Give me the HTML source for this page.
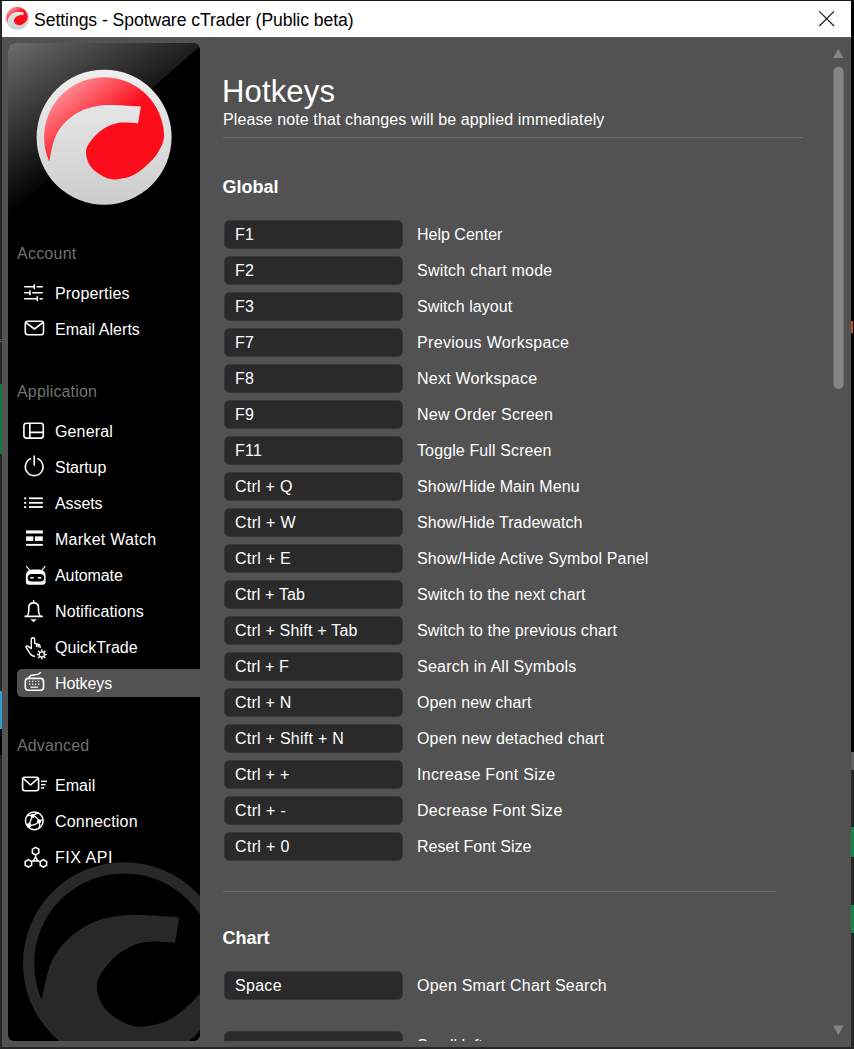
<!DOCTYPE html>
<html><head><meta charset="utf-8"><title>Settings - Spotware cTrader (Public beta)</title>
<style>
*{margin:0;padding:0;box-sizing:border-box}
html,body{width:854px;height:1049px;overflow:hidden;background:#000}
body{position:relative;font-family:"Liberation Sans",sans-serif;color:#fff;font-size:16px}
.abs{position:absolute}
#outer{left:0;top:0;width:854px;height:1049px;background:#262626}
#win{left:2px;top:1px;width:849px;height:1046px;background:#525252;overflow:hidden}
#tbar{left:0;top:0;width:849px;height:36px;background:#fff}
#ttl{left:32px;top:7px;font-size:17.6px;line-height:24px;color:#000;white-space:nowrap;letter-spacing:-0.06px}
#side{left:6px;top:42px;width:192px;height:998px;border-radius:7px 7px 6px 6px;overflow:hidden;background:#000}
#gloss{left:0;top:0;width:192px;height:180px;background:linear-gradient(147.6deg,#6c6c6c 0px,#000 146px);clip-path:polygon(0 0,195.5px 0,0 172px)}
.sh{left:9px;color:#707070;font-size:16px;line-height:20px;white-space:nowrap}
.si{left:47px;color:#fff;font-size:16px;line-height:20px;white-space:nowrap}
#sel{left:9px;top:626px;width:190px;height:28px;background:#525252;border-radius:5px 0 0 5px}
#cont{left:198px;top:36px;width:651px;height:1004px;overflow:hidden}
h1{font-weight:normal;font-size:31px;line-height:36px;left:22px;top:37px;white-space:nowrap;letter-spacing:0.15px}
.sub{left:23px;top:73px;line-height:20px;white-space:nowrap}
.hr{height:1px;background:#686868;left:23px}
.gh{left:22.5px;font-weight:bold;font-size:18px;line-height:20px;white-space:nowrap}
.key{left:24px;width:179px;height:29px;background:#2a2a2a;border:1px solid #383838;border-radius:5.5px;padding-left:10px;line-height:27px;white-space:nowrap}
.lbl{left:217px;line-height:20px;white-space:nowrap}
</style></head><body>
<div id="outer" class="abs">

<div class="abs" style="left:0;top:0;width:854px;height:1px;background:#1a1a1a"></div>
<div class="abs" style="left:0;top:384px;width:2px;height:70px;background:#0f7a3c"></div>
<div class="abs" style="left:0;top:339px;width:2px;height:1px;background:#0f7a3c"></div>
<div class="abs" style="left:0;top:341px;width:2px;height:1px;background:#b8501e"></div>
<div class="abs" style="left:0;top:691px;width:2px;height:38px;background:#2d9fd0"></div>
<div class="abs" style="left:0;top:729px;width:2px;height:26px;background:#000"></div>
<div class="abs" style="left:851px;top:0;width:3px;height:752px;background:#000"></div>
<div class="abs" style="left:851px;top:321px;width:2px;height:12px;background:#c2501c"></div>
<div class="abs" style="left:851px;top:752px;width:3px;height:18px;background:#606060"></div>
<div class="abs" style="left:851px;top:827px;width:3px;height:30px;background:#0f8a44"></div>
<div class="abs" style="left:851px;top:905px;width:3px;height:28px;background:#0f8a44"></div>
<div id="win" class="abs">
<div id="tbar" class="abs">
<svg class="abs" style="left:0;top:0" width="40" height="36" viewBox="2 1 40 36"><g transform="translate(17.2,17.7) scale(0.1775)">
<defs>
<linearGradient id="wa" gradientUnits="userSpaceOnUse" x1="0" y1="-67.5" x2="0" y2="67.5"><stop offset="0" stop-color="#eeeeee"/><stop offset="1" stop-color="#cdcdcd"/></linearGradient>
<linearGradient id="ra" gradientUnits="userSpaceOnUse" x1="-38" y1="-58" x2="2" y2="-8"><stop offset="0" stop-color="#ff9aa0"/><stop offset="1" stop-color="#fb0d1b"/></linearGradient>
</defs>
<circle r="67.5" fill="url(#wa)"/>
<circle r="60" fill="url(#ra)"/>
<path d="M-55.00,24.50 C-53.78,19.97 -51.85,5.07 -47.70,-2.70 C-43.55,-10.47 -37.43,-17.27 -30.10,-22.10 C-22.77,-26.93 -14.83,-30.25 -3.70,-31.70 C7.43,-33.15 29.97,-30.95 36.70,-30.80 L33.90,-13.80 C30.55,-13.87 20.07,-15.45 13.80,-14.20 C7.53,-12.95 1.27,-9.97 -3.70,-6.30 C-8.67,-2.63 -13.65,3.70 -16.00,7.80 C-18.35,11.90 -18.38,14.50 -17.80,18.30 C-17.22,22.10 -15.72,26.93 -12.50,30.60 C-9.28,34.27 -2.88,38.40 1.50,40.30 C5.88,42.20 8.82,42.58 13.80,42.00 C18.78,41.42 25.53,40.15 31.40,36.80 C37.27,33.45 44.75,26.43 49.00,21.90 C53.25,17.37 55.13,12.92 56.90,9.60 C58.67,6.28 58.98,4.27 59.60,2.00 C60.22,-0.27 60.43,-3.00 60.60,-4.00 L63.8,-4.2 A64,64 0 0 1 -58.6,26 Z" fill="url(#wa)"/>
</g></svg>
<div id="ttl" class="abs">Settings - Spotware cTrader (Public beta)</div>
<svg class="abs" style="left:810px;top:4px" width="30" height="30" viewBox="812 5 30 30"><path d="M819.3,11.3L834,26M834,11.3L819.3,26" stroke="#1a1a1a" stroke-width="1.15" fill="none"/></svg>
</div>
<div id="side" class="abs"><div id="gloss" class="abs"></div>
<svg class="abs" style="left:0;top:0" width="192" height="998" viewBox="8 43 192 998">
<g transform="translate(124.2,963.4) scale(1.5)">
<circle r="63.75" fill="none" stroke="#282828" stroke-width="7.5"/>
<path d="M-55.00,24.50 C-53.78,19.97 -51.85,5.07 -47.70,-2.70 C-43.55,-10.47 -37.43,-17.27 -30.10,-22.10 C-22.77,-26.93 -14.83,-30.25 -3.70,-31.70 C7.43,-33.15 29.97,-30.95 36.70,-30.80 L33.90,-13.80 C30.55,-13.87 20.07,-15.45 13.80,-14.20 C7.53,-12.95 1.27,-9.97 -3.70,-6.30 C-8.67,-2.63 -13.65,3.70 -16.00,7.80 C-18.35,11.90 -18.38,14.50 -17.80,18.30 C-17.22,22.10 -15.72,26.93 -12.50,30.60 C-9.28,34.27 -2.88,38.40 1.50,40.30 C5.88,42.20 8.82,42.58 13.80,42.00 C18.78,41.42 25.53,40.15 31.40,36.80 C37.27,33.45 44.75,26.43 49.00,21.90 C53.25,17.37 55.13,12.92 56.90,9.60 C58.67,6.28 58.98,4.27 59.60,2.00 C60.22,-0.27 60.43,-3.00 60.60,-4.00 L63.8,-4.2 A64,64 0 0 1 -58.6,26 Z" fill="#282828"/>
</g>
<g transform="translate(104.1,137.2) scale(1.0)">
<defs>
<linearGradient id="wb" gradientUnits="userSpaceOnUse" x1="0" y1="-67.5" x2="0" y2="67.5"><stop offset="0" stop-color="#eeeeee"/><stop offset="1" stop-color="#cdcdcd"/></linearGradient>
<linearGradient id="rb" gradientUnits="userSpaceOnUse" x1="-38" y1="-58" x2="2" y2="-8"><stop offset="0" stop-color="#ff9aa0"/><stop offset="1" stop-color="#fb0d1b"/></linearGradient>
</defs>
<circle r="67.5" fill="url(#wb)"/>
<circle r="60" fill="url(#rb)"/>
<path d="M-55.00,24.50 C-53.78,19.97 -51.85,5.07 -47.70,-2.70 C-43.55,-10.47 -37.43,-17.27 -30.10,-22.10 C-22.77,-26.93 -14.83,-30.25 -3.70,-31.70 C7.43,-33.15 29.97,-30.95 36.70,-30.80 L33.90,-13.80 C30.55,-13.87 20.07,-15.45 13.80,-14.20 C7.53,-12.95 1.27,-9.97 -3.70,-6.30 C-8.67,-2.63 -13.65,3.70 -16.00,7.80 C-18.35,11.90 -18.38,14.50 -17.80,18.30 C-17.22,22.10 -15.72,26.93 -12.50,30.60 C-9.28,34.27 -2.88,38.40 1.50,40.30 C5.88,42.20 8.82,42.58 13.80,42.00 C18.78,41.42 25.53,40.15 31.40,36.80 C37.27,33.45 44.75,26.43 49.00,21.90 C53.25,17.37 55.13,12.92 56.90,9.60 C58.67,6.28 58.98,4.27 59.60,2.00 C60.22,-0.27 60.43,-3.00 60.60,-4.00 L63.8,-4.2 A64,64 0 0 1 -58.6,26 Z" fill="url(#wb)"/>
</g>

<!-- properties -->
<g stroke="#fff" stroke-width="1.5" fill="none">
<path d="M24.2,286.8H34.3M36.6,286.8H42.8M24.2,292.8H30M32.2,292.8H42.8M24.2,298.7H37.3M39.6,298.7H42.8"/>
<path d="M34.3,284.3V289.3M30,290.3V295.3M37.3,296.2V301.2"/>
</g>
<!-- email alerts -->
<g fill="none" stroke="#fff" stroke-width="1.6" stroke-linecap="butt" stroke-linejoin="round"><rect x="25.3" y="321.3" width="18.2" height="13.4" rx="2.4"/><path d="M26,322.6L34.4,329L42.8,322.6"/></g>
<!-- general -->
<g fill="none" stroke="#fff" stroke-width="1.6" stroke-linecap="butt" stroke-linejoin="round"><rect x="23.9" y="423.3" width="19.4" height="14.8" rx="2.6"/><path d="M29.8,423.3V438.1M29.8,432.4H43.3"/></g>
<!-- startup -->
<g fill="none" stroke="#fff" stroke-width="1.6" stroke-linecap="butt" stroke-linejoin="round"><path d="M31.1,458.6A8.8,8.8 0 1 0 37.3,458.6"/><path d="M34.2,455.4V465.8"/></g>
<!-- assets -->
<g fill="#fff"><rect x="24.2" y="497.4" width="2" height="1.9"/><rect x="24.2" y="501.9" width="2" height="1.9"/><rect x="24.2" y="506.1" width="2" height="1.9"/>
<rect x="29" y="497.4" width="13.8" height="1.8"/><rect x="29" y="501.9" width="13.8" height="1.8"/><rect x="29" y="506.1" width="13.8" height="1.8"/></g>
<!-- market watch -->
<g fill="#fff"><rect x="26.1" y="530.4" width="16.7" height="3.1"/><rect x="26.1" y="536.4" width="7.2" height="4.5"/><rect x="34.9" y="536.4" width="7.9" height="4.5"/><rect x="26.1" y="543.9" width="16.7" height="1.9"/></g>
<!-- automate -->
<g><path d="M26.3,566.2L29.8,570.4M45.3,566.2L41.9,570.4" stroke="#fff" stroke-width="1.2" fill="none"/>
<path d="M31.9,569.4H39.6A6,6 0 0 1 45.6,575.4V581.8A3,3 0 0 1 42.6,584.8H28.9A3,3 0 0 1 25.9,581.8V575.4A6,6 0 0 1 31.9,569.4Z" fill="#fff"/>
<rect x="27.7" y="573.9" width="16.5" height="7.7" rx="3.85" fill="#000"/>
<rect x="30.3" y="577" width="3.2" height="1.6" fill="#fff"/><rect x="37.9" y="577" width="3.4" height="1.6" fill="#fff"/></g>
<!-- notifications -->
<g fill="none" stroke="#fff" stroke-width="1.6" stroke-linecap="butt" stroke-linejoin="round" stroke-width="1.5"><path d="M24.5,616.4H42.8M27,616C28.6,614.6 28.8,613 28.8,610.5V607.6C28.8,604.6 30.9,602.9 33.6,602.9C36.3,602.9 38.5,604.6 38.5,607.6V610.5C38.5,613 38.7,614.6 40.3,616"/><path d="M33.6,600V602.9" stroke-width="1.3"/></g>
<path d="M30.4,619.2H36.8L33.6,622.2Z" fill="#fff"/>
<!-- quicktrade -->
<g fill="none" stroke="#fff" stroke-width="1.45" stroke-linecap="round" stroke-linejoin="round">
<path d="M34.6,656.2C31.5,656.2 30.6,654.6 29,651.9L26.2,647.5C25.6,646.4 26.6,645.5 27.8,646.2L31.3,648.6V639.4C31.3,637.3 34.7,637.3 34.7,639.4V643.4L38.6,644.4C39.6,644.7 40.1,645.5 40.1,646.6V647.6"/>
<path d="M36.5,644.2V646.4M38.3,644.6V646.8"/>
</g>
<g fill="none" stroke="#fff"><circle cx="41.8" cy="654.4" r="2.6" stroke-width="1.3"/>
<path d="M41.8,649.5V651.2M41.8,657.6V659.3M36.9,654.4H38.6M45,654.4H46.7M38.3,650.9L39.5,652.1M44.1,656.7L45.3,657.9M38.3,657.9L39.5,656.7M44.1,652.1L45.3,650.9" stroke-width="1.5"/></g>

</svg>
<div id="sel" class="abs"></div>
<svg class="abs" style="left:0;top:0" width="192" height="998" viewBox="8 43 192 998">

<!-- hotkeys -->
<g fill="none" stroke="#fff" stroke-width="1.6" stroke-linecap="butt" stroke-linejoin="round" stroke-width="1.5"><rect x="25.3" y="678.4" width="18.2" height="11.8" rx="3"/><path d="M29.1,678.2C29.1,675.4 31,675.2 34,674.9C37.6,674.6 40.2,674.6 40.5,672" stroke-width="1.5"/></g>
<g fill="#fff"><rect x="28.95" y="680.75" width="1.3" height="1.3"/><rect x="31.95" y="680.75" width="1.3" height="1.3"/><rect x="34.95" y="680.75" width="1.3" height="1.3"/><rect x="37.95" y="680.75" width="1.3" height="1.3"/><rect x="28.95" y="683.55" width="1.3" height="1.3"/><rect x="31.95" y="683.55" width="1.3" height="1.3"/><rect x="34.95" y="683.55" width="1.3" height="1.3"/><rect x="37.95" y="683.55" width="1.3" height="1.3"/><rect x="30.5" y="686.6" width="7.4" height="1.2"/></g>
<!-- email adv -->
<g fill="none" stroke="#fff" stroke-width="1.6" stroke-linecap="butt" stroke-linejoin="round" stroke-width="1.5"><rect x="22.6" y="777.3" width="16" height="13.4" rx="2.2"/><path d="M23.2,778.4L30.6,785L38,778.4"/></g>
<g fill="#fff"><rect x="41" y="780.6" width="6" height="1.5"/><rect x="41" y="783.9" width="4.6" height="1.5"/><rect x="41" y="787.1" width="3.2" height="1.5"/></g>
<!-- connection -->
<g fill="none" stroke="#fff" stroke-width="1.5"><circle cx="34.3" cy="820.8" r="8.85"/>
<path d="M32.65,815.9Q36.9,816.4 39.05,821.4M39.05,821.4Q35.6,825.6 29,825.35M32.65,815.9Q30.4,820.4 29,825.35M32.65,815.9Q35.4,813.3 38.6,813M32.65,815.9Q29.6,814.9 27,815.9M39.05,821.4Q41.4,819.9 43,819.6M39.05,821.4Q40.3,825 39.2,828.2" stroke-width="1.35"/></g>
<g fill="#fff"><circle cx="32.65" cy="815.9" r="2.1"/><circle cx="29.1" cy="825.3" r="2.4"/><circle cx="39.05" cy="821.4" r="2.1"/></g>
<!-- fix api -->
<polygon points="35.60,847.40 32.40,849.25 32.40,852.95 35.60,854.80 38.80,852.95 38.80,849.25" fill="none" stroke="#fff" stroke-width="1.55"/><polygon points="28.40,859.70 25.20,861.55 25.20,865.25 28.40,867.10 31.60,865.25 31.60,861.55" fill="none" stroke="#fff" stroke-width="1.55"/><polygon points="43.40,859.70 40.20,861.55 40.20,865.25 43.40,867.10 46.60,865.25 46.60,861.55" fill="none" stroke="#fff" stroke-width="1.55"/>
<path d="M35.6,854.8V857.4M31.6,861.6L33.8,860.3M39.6,861.6L37.4,860.3M35.6,857L33.3,861H37.9Z" fill="none" stroke="#fff" stroke-width="1.5"/>

</svg>
<div class="abs sh" style="top:201px;letter-spacing:0.233px">Account</div>
<div class="abs sh" style="top:339px;letter-spacing:0.160px">Application</div>
<div class="abs sh" style="top:693px;letter-spacing:0.143px">Advanced</div>
<div class="abs si" style="top:241px;letter-spacing:0.178px">Properties</div>
<div class="abs si" style="top:277px;letter-spacing:0.036px">Email Alerts</div>
<div class="abs si" style="top:379px;letter-spacing:0.133px">General</div>
<div class="abs si" style="top:415px;letter-spacing:-0.033px">Startup</div>
<div class="abs si" style="top:451px;letter-spacing:-0.080px">Assets</div>
<div class="abs si" style="top:487px;letter-spacing:0.272px">Market Watch</div>
<div class="abs si" style="top:523px;letter-spacing:-0.086px">Automate</div>
<div class="abs si" style="top:559px;letter-spacing:0.134px">Notifications</div>
<div class="abs si" style="top:595px;letter-spacing:0.067px">QuickTrade</div>
<div class="abs si" style="top:631px;letter-spacing:-0.100px">Hotkeys</div>
<div class="abs si" style="top:733px;letter-spacing:0.050px">Email</div>
<div class="abs si" style="top:769px;letter-spacing:0.178px">Connection</div>
<div class="abs si" style="top:805px;letter-spacing:0.534px">FIX API</div>
</div>
<div id="cont" class="abs">
<h1 class="abs">Hotkeys</h1>
<div class="abs sub" style="letter-spacing:0.118px">Please note that changes will be applied immediately</div>
<div class="abs hr" style="top:100px;width:580px"></div>
<div class="abs gh" style="top:140px">Global</div>
<div class="abs key" style="top:182.5px;letter-spacing:0.300px">F1</div><div class="abs lbl" style="top:188px">Help Center</div>
<div class="abs key" style="top:218.5px;letter-spacing:0.300px">F2</div><div class="abs lbl" style="top:224px;letter-spacing:0.224px">Switch chart mode</div>
<div class="abs key" style="top:254.5px;letter-spacing:0.300px">F3</div><div class="abs lbl" style="top:260px;letter-spacing:0.083px">Switch layout</div>
<div class="abs key" style="top:290.5px;letter-spacing:0.300px">F7</div><div class="abs lbl" style="top:296px;letter-spacing:0.329px">Previous Workspace</div>
<div class="abs key" style="top:326.5px;letter-spacing:0.300px">F8</div><div class="abs lbl" style="top:332px;letter-spacing:0.230px">Next Workspace</div>
<div class="abs key" style="top:362.5px;letter-spacing:0.300px">F9</div><div class="abs lbl" style="top:368px;letter-spacing:0.227px">New Order Screen</div>
<div class="abs key" style="top:398.5px;letter-spacing:0.300px">F11</div><div class="abs lbl" style="top:404px;letter-spacing:0.118px">Toggle Full Screen</div>
<div class="abs key" style="top:434.5px;letter-spacing:0.257px">Ctrl + Q</div><div class="abs lbl" style="top:440px;letter-spacing:0.088px">Show/Hide Main Menu</div>
<div class="abs key" style="top:470.5px;letter-spacing:0.342px">Ctrl + W</div><div class="abs lbl" style="top:476px;letter-spacing:0.042px">Show/Hide Tradewatch</div>
<div class="abs key" style="top:506.5px;letter-spacing:0.286px">Ctrl + E</div><div class="abs lbl" style="top:512px;letter-spacing:0.128px">Show/Hide Active Symbol Panel</div>
<div class="abs key" style="top:542.5px;letter-spacing:0.155px">Ctrl + Tab</div><div class="abs lbl" style="top:548px;letter-spacing:0.096px">Switch to the next chart</div>
<div class="abs key" style="top:578.5px;letter-spacing:0.212px">Ctrl + Shift + Tab</div><div class="abs lbl" style="top:584px;letter-spacing:0.126px">Switch to the previous chart</div>
<div class="abs key" style="top:614.5px;letter-spacing:0.114px">Ctrl + F</div><div class="abs lbl" style="top:620px;letter-spacing:0.230px">Search in All Symbols</div>
<div class="abs key" style="top:650.5px;letter-spacing:0.228px">Ctrl + N</div><div class="abs lbl" style="top:656px;letter-spacing:0.108px">Open new chart</div>
<div class="abs key" style="top:686.5px;letter-spacing:0.254px">Ctrl + Shift + N</div><div class="abs lbl" style="top:692px;letter-spacing:0.173px">Open new detached chart</div>
<div class="abs key" style="top:722.5px;letter-spacing:0.257px">Ctrl + +</div><div class="abs lbl" style="top:728px;letter-spacing:0.282px">Increase Font Size</div>
<div class="abs key" style="top:758.5px;letter-spacing:0.342px">Ctrl + -</div><div class="abs lbl" style="top:764px;letter-spacing:0.282px">Decrease Font Size</div>
<div class="abs key" style="top:794.5px;letter-spacing:0.343px">Ctrl + 0</div><div class="abs lbl" style="top:800px;letter-spacing:0.043px">Reset Font Size</div>
<div class="abs hr" style="top:854px;width:553px"></div>
<div class="abs gh" style="top:891px">Chart</div>
<div class="abs key" style="top:933.5px;letter-spacing:0.300px">Space</div><div class="abs lbl" style="top:939px;letter-spacing:0.218px">Open Smart Chart Search</div>
<div class="abs key" style="top:993.5px"></div><div class="abs lbl" style="top:999px">Scroll left</div>
<svg class="abs" style="left:620px;top:0" width="31" height="1004" viewBox="820 37 31 1004"><path d="M833,58L838.3,49L843.6,58Z" fill="#848484"/><rect x="833.4" y="66.7" width="10.2" height="322.4" rx="5.1" fill="#848484"/><path d="M833,1025.6L843.6,1025.6L838.3,1034.9Z" fill="#848484"/></svg>
</div>
</div></div></body></html>
